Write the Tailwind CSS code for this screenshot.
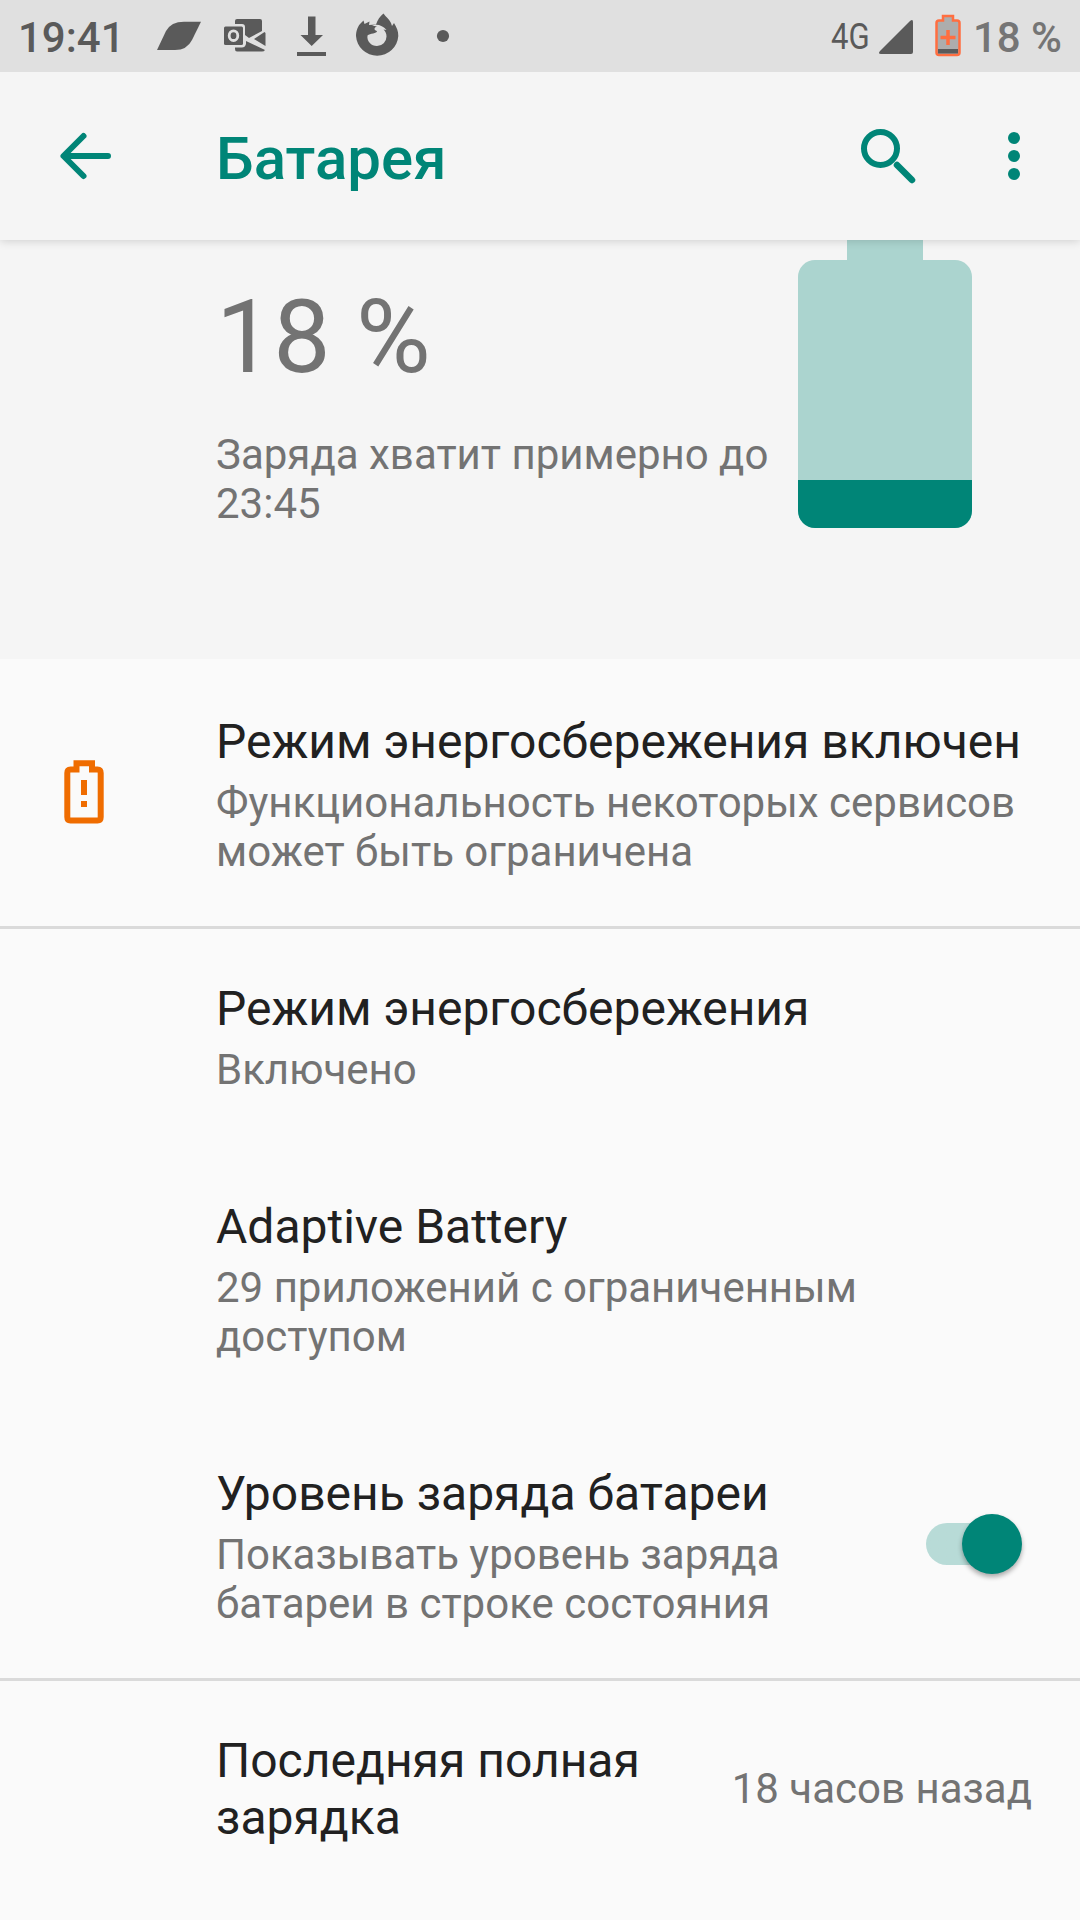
<!DOCTYPE html>
<html lang="ru">
<head>
<meta charset="utf-8">
<title>Батарея</title>
<script src="https://cdn.jsdelivr.net/npm/@tailwindcss/browser@4"></script>
</head>
<body class="w-[1080px] h-[1920px] overflow-hidden bg-[#fafafa] font-['Roboto',sans-serif] text-[42px] leading-[49px] text-[#737373]">
<div class="flex flex-col h-[1920px]">
  <!-- Status bar -->
  <div class="relative z-20 flex items-center justify-between h-[72px] bg-[#e0e0e0] text-[#5a5a5a] pl-[18px] pr-[18px] shrink-0">
    <div class="flex items-center h-[72px]">
      <span class="font-medium w-[102px] whitespace-nowrap pt-0.5">19:41</span>
      <svg class="w-[340px] h-[72px]" viewBox="120 0 340 72" fill="#5a5a5a">
        <path d="M157 50L166 31Q171 21.7 184 21.7H201L192 40Q187 50 175 50Z"/>
        <path d="M237 19H260Q262 19 262 21V31L249 38L245 35V27Q245 24 242 24H235V21Q235 19 237 19ZM264.500 32L265.500 33V46L254 39ZM235 47.500H242Q245 47.500 246 44V41L265 50Q264 51.500 262 51.500H237Q235 51.500 235 49Z"/>
        <rect x="224" y="26.500" width="19" height="18.500" rx="1.500"/>
        <ellipse cx="233.500" cy="35.700" rx="4.300" ry="4.800" fill="none" stroke="#e0e0e0" stroke-width="2.800"/>
        <path d="M308 16.500H315.500V35H323L311.700 46L300.500 35H308ZM297 52H326V56H297Z"/>
        <path fill-rule="evenodd" d="M383.500 13.500C386 17 389 19 391 23L392 26L394 23C397 28 398.300 31 398.300 36A21.200 21.200 0 0 1 356 36C356 31 358 26 360.500 23.500L363.500 20.500L364.500 24L369.500 21.500L369 25L376 24.500C377.500 20 380 16 383.500 13.500ZM372 25.500L377 26.500C373 28 374.500 30.500 377 31C377 34 370 33 367.500 35.500C366.500 41 371 46 377 46A9.500 9.500 0 0 0 386.500 36.500C386.500 34 385.500 31 383.500 29.500L386.500 30C383 25.500 377 23.500 372 25.500Z"/>
        <circle cx="443" cy="36" r="6.100"/>
      </svg>
    </div>
    <div class="flex items-center h-[72px]">
      <span class="text-[37px] w-[40px] whitespace-nowrap origin-left scale-x-[0.84]">4G</span>
      <svg class="w-[102px] h-[72px]" viewBox="871 0 102 72" fill="#5a5a5a">
        <path d="M880 51L910 21Q913 18.500 913 22V52Q913 54 911 54H881Q877.500 54 880 51Z"/>
        <path d="M943 16H953V20.500H957Q959.500 20.500 959.500 23V52.500Q959.500 55 957 55H939Q936.500 55 936.500 52.500V23Q936.500 20.500 939 20.500H943Z" fill="#adadad" stroke="#ff6e40" stroke-width="2.500"/>
        <path d="M938 49H958V53.500H938Z"/>
        <path d="M940.500 37.500H955.500M948 30V45" stroke="#ff6e40" stroke-width="3.500"/>
      </svg>
      <span class="font-medium text-[#757575] whitespace-nowrap pt-0.5">18 %</span>
    </div>
  </div>
  <!-- App bar -->
  <div class="relative flex items-center h-[168px] bg-[#f5f5f5] shadow-[0_1px_9px_rgba(0,0,0,0.16)] z-10 shrink-0">
    <svg class="w-[216px] h-[168px]" viewBox="0 72 216 168" fill="none" stroke="#008577" stroke-width="6" stroke-linecap="round" stroke-linejoin="round"><path d="M83.500 136L63.500 156L83.500 176M64 156H108"/></svg>
    <h1 class="grow text-[60px] leading-[72px] font-medium text-[#008577] pt-1.5">Батарея</h1>
    <svg class="w-[240px] h-[168px]" viewBox="840 72 240 168" fill="#008577"><circle cx="880.500" cy="148.500" r="16.500" fill="none" stroke="#008577" stroke-width="6"/><path d="M897 165L912 180" stroke="#008577" stroke-width="6.500" stroke-linecap="round"/><circle cx="1014" cy="138" r="6"/><circle cx="1014" cy="156" r="6"/><circle cx="1014" cy="174" r="6"/></svg>
  </div>
  <!-- Charge summary -->
  <div class="flex h-[419px] bg-[#f5f5f5] pl-[216px] shrink-0">
    <div class="w-[582px] pt-[37px]">
      <div class="text-[102px] leading-[120px]">18 %</div>
      <div class="mt-[33px] whitespace-nowrap">Заряда хватит примерно до<br>23:45</div>
    </div>
    <div class="flex flex-col items-center w-[174px]">
      <div class="w-[76px] h-5 bg-[#abd4cf]"></div>
      <div class="flex flex-col justify-end w-[174px] h-[268px] rounded-[17px] overflow-hidden bg-[#abd4cf]"><div class="h-12 bg-[#008577]"></div></div>
    </div>
  </div>
  <!-- Power saving notice -->
  <div class="flex h-[267px] shrink-0">
    <svg class="w-[216px] h-[267px]" viewBox="0 659 216 267"><path d="M76.500 763.300H92V769.500H97.500Q100.700 769.500 100.700 773V817Q100.700 820.500 97.500 820.500H70.500Q67.300 820.500 67.300 817V773Q67.300 769.500 70.500 769.500H76.500Z" fill="none" stroke="#ef6c00" stroke-width="6"/><path d="M81 780H87V795H81ZM81 801H87V807H81Z" fill="#ef6c00"/></svg>
    <div class="pt-[54px] whitespace-nowrap">
      <h2 class="text-[48px] leading-[57px] text-[#212121]">Режим энергосбережения включен</h2>
      <p class="mt-2">Функциональность некоторых сервисов<br>может быть ограничена</p>
    </div>
  </div>
  <div class="h-[218px] border-t-3 border-[#dadada] pt-[51px] pl-[216px] shrink-0">
    <h2 class="text-[48px] leading-[57px] text-[#212121]">Режим энергосбережения</h2>
    <p class="mt-2">Включено</p>
  </div>
  <div class="h-[267px] pt-[54px] pl-[216px] shrink-0">
    <h2 class="text-[48px] leading-[57px] text-[#212121]">Adaptive Battery</h2>
    <p class="mt-2">29 приложений с ограниченным<br>доступом</p>
  </div>
  <div class="flex items-center justify-between h-[267px] pl-[216px] pr-[58px] shrink-0">
    <div class="self-start pt-[54px]">
      <h2 class="text-[48px] leading-[57px] text-[#212121]">Уровень заряда батареи</h2>
      <p class="mt-2">Показывать уровень заряда<br>батареи в строке состояния</p>
    </div>
    <div class="self-start mt-28 flex items-center justify-end w-[96px] h-[42px] rounded-full bg-linear-to-r from-[#b8dbd7] from-70% to-transparent to-70%">
      <div class="size-[60px] shrink-0 rounded-full bg-[#008577] shadow-[0_3px_5px_rgba(0,0,0,0.33)]"></div>
    </div>
  </div>
  <div class="flex justify-between h-[242px] border-t-3 border-[#dadada] pt-[51px] pl-[216px] pr-12 shrink-0">
    <h2 class="text-[48px] leading-[57px] text-[#212121]">Последняя полная<br>зарядка</h2>
    <div class="flex items-center h-[112px]">18 часов назад</div>
  </div>
</div>
</body>
</html>
